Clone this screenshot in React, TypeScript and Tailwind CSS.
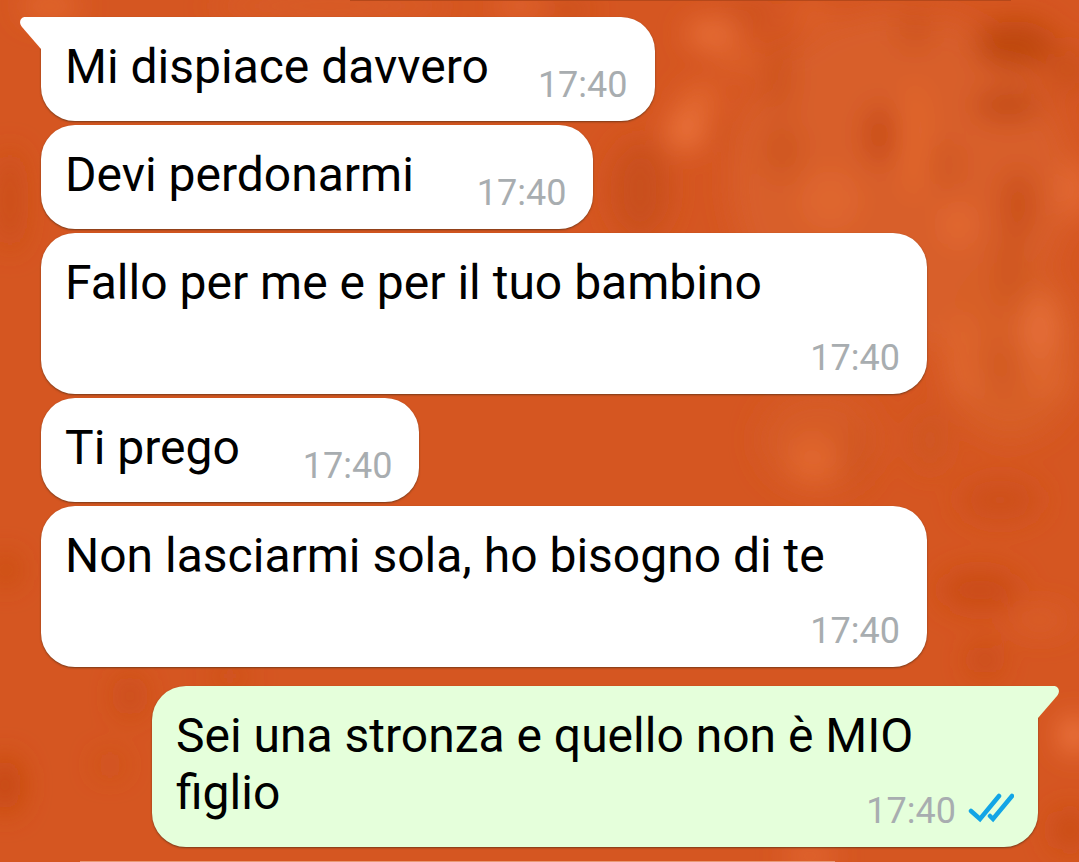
import React from "react";

type MessageType = {
  text: string;
  time: string;
  mine?: boolean;
  tail?: boolean;
};

const messages: MessageType[] = [
  { text: "Mi dispiace davvero", time: "17:40", tail: true },
  { text: "Devi perdonarmi", time: "17:40" },
  { text: "Fallo per me e per il tuo bambino", time: "17:40" },
  { text: "Ti prego", time: "17:40" },
  { text: "Non lasciarmi sola, ho bisogno di te", time: "17:40" },
  {
    text: "Sei una stronza e quello non è MIO figlio",
    time: "17:40",
    mine: true,
    tail: true,
  },
];

// Soft light and dark patches: [cx, cy, rx, ry, color]
const patches: Array<[number, number, number, number, string]> = [
  [900, 180, 170, 170, "#d85f29"],
  [1010, 350, 70, 90, "#d75e28"],
  [820, 440, 60, 50, "#d65c27"],
  [50, 6, 30, 14, "#e2682f"],
  [330, 6, 120, 10, "#da5f29"],
  [520, 6, 26, 12, "#e0642d"],
  [570, 10, 20, 10, "#ca501b"],
  [750, 14, 24, 8, "#c94f1a"],
  [812, 14, 18, 8, "#e2672f"],
  [712, 34, 26, 12, "#ec753d"],
  [740, 62, 30, 10, "#dd632b"],
  [686, 130, 18, 20, "#ec753d"],
  [724, 136, 8, 8, "#cb521c"],
  [700, 100, 20, 16, "#e2682f"],
  [640, 190, 30, 50, "#c9501b"],
  [778, 75, 14, 40, "#cd521d"],
  [782, 150, 16, 30, "#cd541e"],
  [915, 30, 16, 20, "#cd521d"],
  [880, 135, 12, 30, "#c34410"],
  [1015, 45, 40, 24, "#be460e"],
  [1008, 105, 34, 16, "#c34b12"],
  [1070, 70, 20, 24, "#cb511c"],
  [1018, 205, 14, 36, "#c84e19"],
  [1010, 270, 14, 40, "#cd541e"],
  [946, 165, 8, 22, "#c95019"],
  [915, 140, 12, 60, "#e2682f"],
  [830, 200, 30, 30, "#df662f"],
  [958, 225, 12, 20, "#e76d36"],
  [1075, 190, 12, 30, "#e66c35"],
  [1040, 330, 14, 36, "#e8713a"],
  [960, 350, 14, 40, "#df662f"],
  [1000, 370, 8, 24, "#cb521c"],
  [812, 460, 22, 24, "#e2682f"],
  [858, 455, 5, 36, "#c74d16"],
  [930, 440, 14, 30, "#ce5720"],
  [970, 385, 20, 10, "#df6730"],
  [1046, 382, 20, 10, "#e26a33"],
  [1000, 500, 40, 20, "#ce501b"],
  [980, 590, 40, 20, "#ca4b15"],
  [1040, 620, 30, 12, "#da5e29"],
  [985, 660, 14, 14, "#c64812"],
  [1074, 735, 14, 18, "#f27b47"],
  [1070, 830, 18, 20, "#c94b15"],
  [5, 785, 16, 28, "#c54610"],
  [130, 696, 10, 20, "#c64812"],
  [230, 676, 20, 6, "#c64812"],
  [110, 765, 12, 8, "#cb4f1a"],
  [10, 200, 10, 50, "#c84b12"],
  [6, 570, 10, 14, "#c54610"],
  [810, 856, 26, 8, "#ea703a"],
];

const Wallpaper: React.FC = () => (
  <svg
    className="absolute inset-0 h-full w-full"
    viewBox="0 0 1079 862"
    preserveAspectRatio="none"
    aria-hidden="true"
  >
    <defs>
      <filter id="soft" x="-50%" y="-50%" width="200%" height="200%">
        <feGaussianBlur stdDeviation="14" />
      </filter>
    </defs>
    <rect width="1079" height="862" fill="#d55621" />
    <g filter="url(#soft)">
      {patches.map(([cx, cy, rx, ry, color], index) => (
        <ellipse key={index} cx={cx} cy={cy} rx={rx} ry={ry} fill={color} />
      ))}
    </g>
  </svg>
);

const Tail: React.FC<{ mine?: boolean }> = ({ mine }) => (
  <svg
    className={`absolute top-0 h-8 w-[22px] ${
      mine ? "left-full -ml-px text-[#e5ffdb]" : "right-full -mr-px text-white"
    }`}
    viewBox="0 0 22 32"
    aria-hidden="true"
  >
    <path
      d={
        mine
          ? "M0 0H17C21 0 24 5 20 10L1 32H0Z"
          : "M22 0H5C1 0 -2 5 2 10L21 32H22Z"
      }
      fill="currentColor"
    />
  </svg>
);

const ReadTicks: React.FC = () => (
  <svg
    className="mb-1.5 ml-3 h-[30px] w-[46px]"
    viewBox="0 0 46 30"
    fill="none"
    stroke="#12a5e6"
    strokeWidth="4.5"
    strokeLinecap="round"
    role="img"
    aria-label="Letto"
  >
    <path d="M3 18L12 26L31 3" />
    <path d="M22 23L25 26L44 3" />
  </svg>
);

const Bubble: React.FC<{ message: MessageType }> = ({ message }) => {
  const { text, time, mine, tail } = message;

  return (
    <li
      className={`flex ${
        mine ? "mt-[15px] justify-end pl-[111px]" : "justify-start pr-[111px]"
      }`}
    >
      <div
        className={`relative flow-root rounded-[34px] pt-[21px] pb-[15px] pl-6 shadow-[0_1px_2px_rgba(60,40,20,0.6)] ${
          mine ? "bg-[#e5ffdb] pr-6" : "bg-white pr-[27px]"
        } ${tail ? (mine ? "rounded-tr-none" : "rounded-tl-none") : ""}`}
      >
        {tail && <Tail mine={mine} />}
        <p className="text-[48px] leading-[57px] text-black">
          {text}
          <span
            className={`float-right flex items-center pt-[26px] text-[36px] leading-[42px] text-[#a8adb0] ${
              tail ? "ml-[49px]" : "ml-[63px]"
            }`}
          >
            <time>{time}</time>
            {mine && <ReadTicks />}
          </span>
        </p>
      </div>
    </li>
  );
};

const App: React.FC = () => {
  return (
    <main className="relative min-h-screen overflow-hidden bg-[#d55621] font-[Roboto,sans-serif]">
      <Wallpaper />
      <div className="relative">
        {/* Edge of the previous bubble */}
        <div className="mr-[68px] ml-[350px] h-px bg-[#b5481a]" />
        <ul className="flex flex-col gap-1 px-[41px] pt-4 pb-3.5">
          {messages.map((message, index) => (
            <Bubble key={index} message={message} />
          ))}
        </ul>
        {/* Edge of the next bubble */}
        <div className="mr-[244px] ml-20 h-px bg-[#e99a76]" />
      </div>
    </main>
  );
};

export default App;
